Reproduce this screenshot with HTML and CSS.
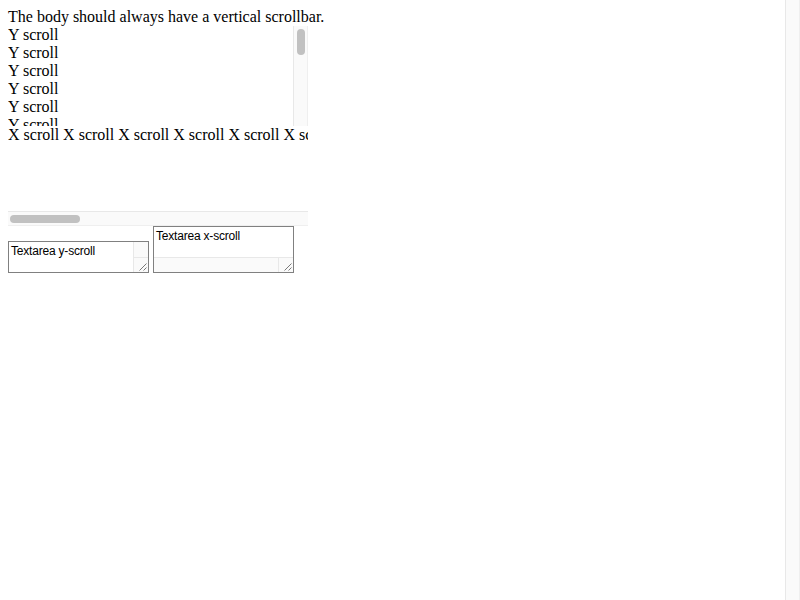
FILE: index.html
```html
<!DOCTYPE html>
<html>
<head>
<meta charset="utf-8">
<link rel="stylesheet" href="styles.css">
</head>
<body class="page">
<div class="layout">
  <main class="main">
    The body should always have a vertical scrollbar.
    <div class="yscroll">
      <div class="yscroll-content">
        Y scroll<br>Y scroll<br>Y scroll<br>Y scroll<br>Y scroll<br>Y scroll<br>Y scroll<br>Y scroll<br>Y scroll<br>Y scroll<br>Y scroll<br>Y scroll<br>Y scroll<br>Y scroll<br>Y scroll<br>Y scroll<br>Y scroll<br>Y scroll<br>Y scroll<br>Y scroll
      </div>
      <div class="vbar"><div class="vthumb"></div></div>
    </div>
    <div class="xscroll">
      <div class="xscroll-content">X scroll X scroll X scroll X scroll X scroll X scroll X scroll X scroll X scroll X scroll X scroll X scroll X scroll X scroll X scroll X scroll X scroll X scroll X scroll X scroll X scroll X scroll</div>
      <div class="hbar"><div class="hthumb"></div></div>
    </div>
    <span class="tabox tabox-y"><textarea class="ta">Textarea y-scroll</textarea><span class="tabar-y"><span class="tatrack-y"></span><span class="resizer"><svg width="14" height="14" viewBox="0 0 14 14"><path d="M12.5 5.5 L5.5 12.5 M12.5 9.5 L9.5 12.5" stroke="#7a7a7a" stroke-width="1" fill="none"/></svg></span></span></span>
    <span class="tabox tabox-x"><textarea class="ta">Textarea x-scroll</textarea><span class="tabar-x"><span class="tatrack-x"></span><span class="resizer"><svg width="14" height="14" viewBox="0 0 14 14"><path d="M12.5 5.5 L5.5 12.5 M12.5 9.5 L9.5 12.5" stroke="#7a7a7a" stroke-width="1" fill="none"/></svg></span></span></span>
  </main>
  <div class="page-vbar"></div>
</div>
</body>
</html>
```
FILE: styles.css
```css
html, body { margin: 0; padding: 0; }
.page { font-family: "Liberation Serif", serif; font-size: 16px; line-height: normal; color: #000; background: #fff; }
.layout { display: flex; height: 600px; overflow: hidden; }
.main { flex: 1; padding: 8px; min-width: 0; }
.page-vbar {
  width: 15px; box-sizing: border-box; height: 600px;
  background: #fafafa; border-left: 1px solid #e8e8e8; border-right: 1px solid #efefef;
}

.yscroll { display: flex; width: 300px; height: 100px; }
.yscroll-content { flex: 1; overflow: hidden; }
.vbar {
  width: 15px; box-sizing: border-box; padding: 3px 3px 0 3px;
  background: #fafafa; border-left: 1px solid #e8e8e8; border-right: 1px solid #efefef;
}
.vthumb { width: 8px; height: 26px; background: #c1c1c1; border-radius: 4px; }

.xscroll { display: flex; flex-direction: column; width: 300px; height: 100px; }
.xscroll-content { flex: 1; overflow: hidden; white-space: nowrap; }
.hbar {
  height: 15px; box-sizing: border-box; padding: 3px 2px;
  background: #fafafa; border-top: 1px solid #e8e8e8; border-bottom: 1px solid #efefef;
}
.hthumb { width: 70px; height: 8px; background: #c1c1c1; border-radius: 4px; }

.tabox {
  display: inline-flex; box-sizing: border-box; width: 141px;
  border: 1px solid #808080; background: #fff; vertical-align: bottom;
}
.tabox-y { height: 32px; flex-direction: row; }
.tabox-x { height: 47px; flex-direction: column; }
.ta {
  flex: 1; min-width: 0; min-height: 0; margin: 0; padding: 2px 2px;
  border: 0; outline: none; resize: none; overflow: hidden; white-space: nowrap;
  font-family: "Liberation Sans", Arial, sans-serif; font-size: 12px; letter-spacing: -0.2px; line-height: 14px;
  color: #000; background: #fff;
}
.tabar-y { display: flex; flex-direction: column; width: 15px; }
.tatrack-y { flex: 1; background: #fafafa; border-left: 1px solid #e8e8e8; }
.tabar-x { display: flex; flex-direction: row; height: 15px; }
.tatrack-x { flex: 1; background: #fafafa; border-top: 1px solid #e8e8e8; }
.resizer {
  display: flex; width: 15px; height: 15px; box-sizing: border-box;
  background: #fafafa; border-left: 1px solid #e8e8e8; border-top: 1px solid #e8e8e8;
}
```
